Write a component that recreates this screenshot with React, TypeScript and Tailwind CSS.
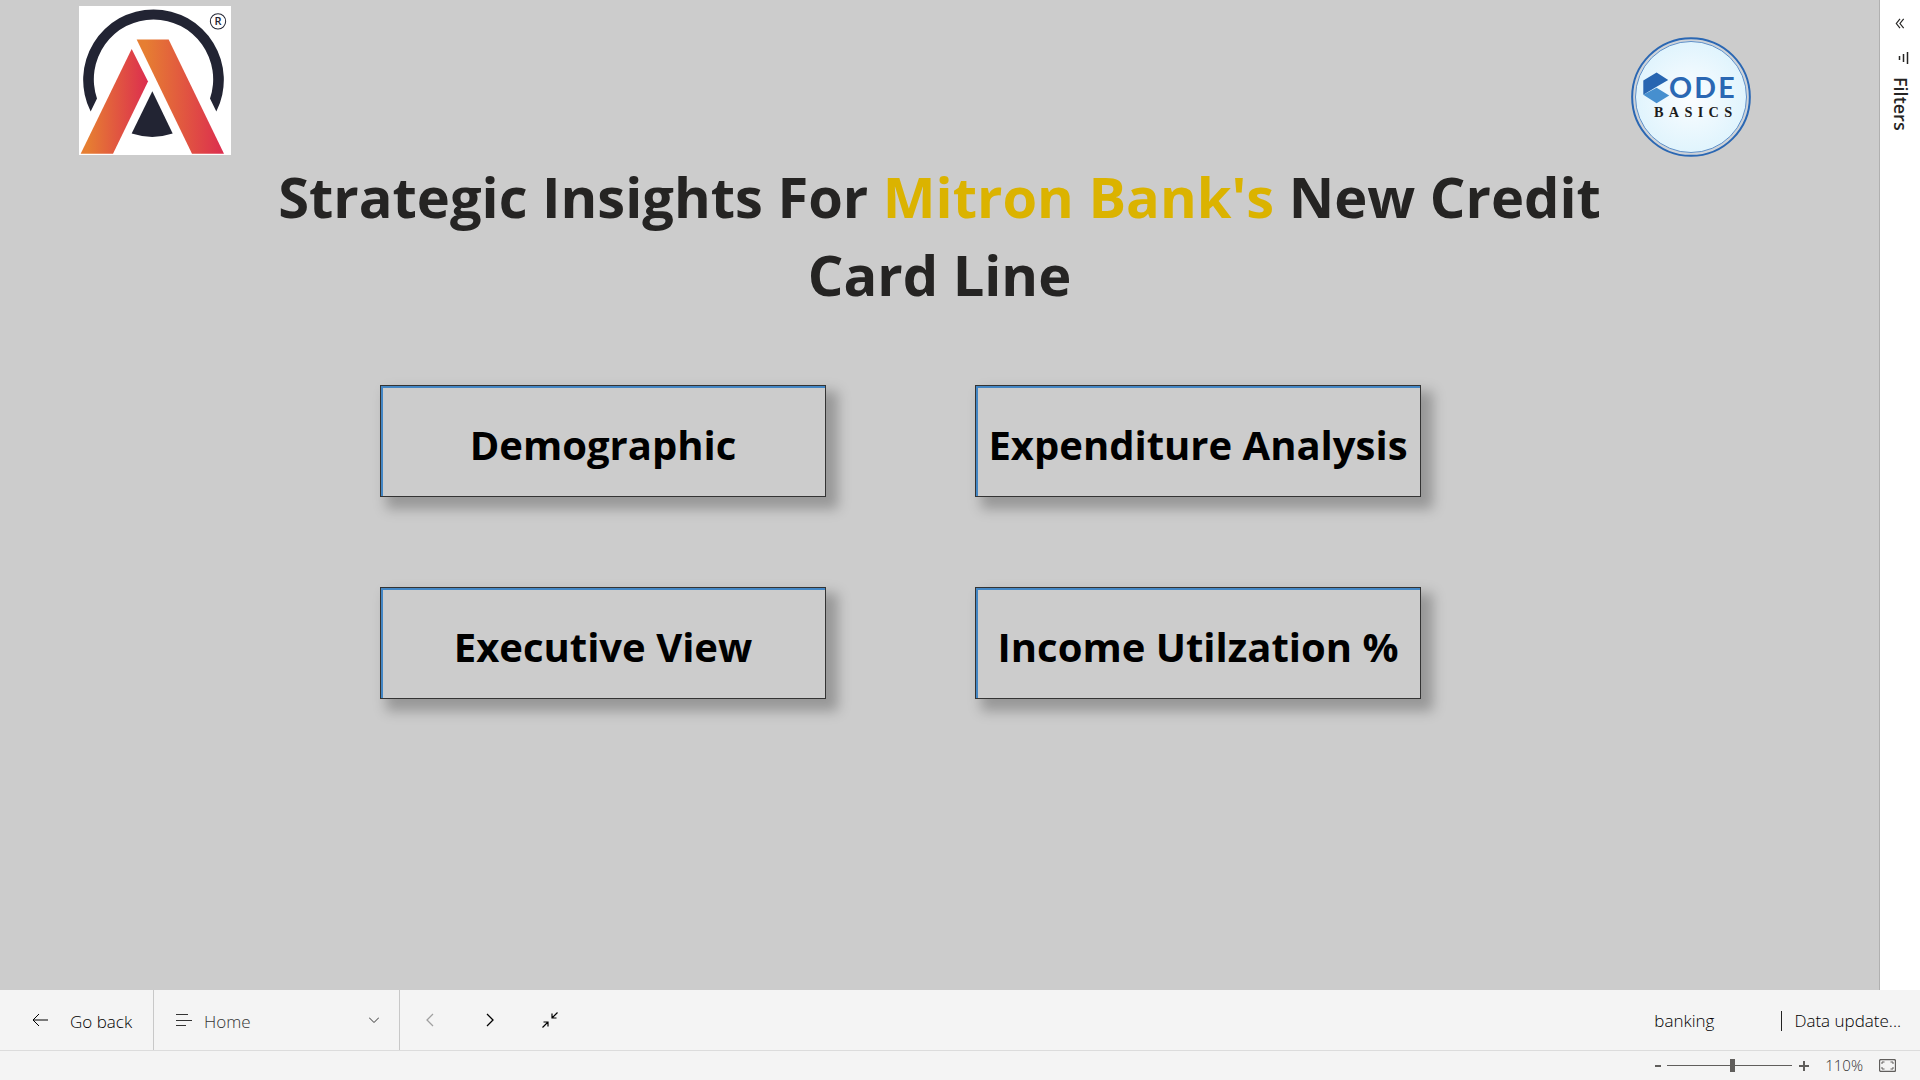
import React from "react";

const tiles = ["Demographic", "Expenditure Analysis", "Executive View", "Income Utilzation %"];

function AtliqLogo() {
  return (
    <svg className="h-[149px] w-[152px]" viewBox="57 19 456 446" preserveAspectRatio="none" role="img" aria-label="AtliQ logo">
      <defs>
        <linearGradient id="legLeft" x1="62" x2="264" y1="0" y2="0" gradientUnits="userSpaceOnUse">
          <stop offset="0.1" stopColor="#e67e32" />
          <stop offset="1" stopColor="#dc2d4f" />
        </linearGradient>
        <linearGradient id="legRight" x1="230" x2="492" y1="0" y2="0" gradientUnits="userSpaceOnUse">
          <stop offset="0.1" stopColor="#e67e32" />
          <stop offset="1" stopColor="#dc2d4f" />
        </linearGradient>
      </defs>
      <rect x="57" y="19" width="456" height="446" fill="#fff" />
      <path d="M92 335A211 211 0 1 1 469 335L450 296A179 179 0 1 0 111 296Z" fill="#222433" />
      <path d="M215 148L264 245L159 461H62Z" fill="url(#legLeft)" />
      <path d="M230 119H326L492 461H396Z" fill="url(#legRight)" />
      <path d="M277 274L338 401Q277 421 215 401Z" fill="#222433" />
      <circle cx="474" cy="65" r="23" fill="none" stroke="#222433" strokeWidth="3" />
      <text x="474" y="77" textAnchor="middle" fontSize="33" fontWeight="600" fill="#222433">R</text>
    </svg>
  );
}

function CodeBasicsLogo() {
  return (
    <svg className="mt-[31px] size-[120px]" viewBox="62 50 361 361" role="img" aria-label="Codebasics logo">
      <defs>
        <radialGradient id="disc">
          <stop offset="0" stopColor="#fbfdff" />
          <stop offset="1" stopColor="#e0f4fd" />
        </radialGradient>
      </defs>
      <circle cx="242.500" cy="230.500" r="177" fill="#cfd3d8" stroke="#2a67b3" strokeWidth="6" />
      <circle cx="242.500" cy="230.500" r="167" fill="url(#disc)" stroke="#5f90c8" strokeWidth="3" />
      <path d="M139 203L177 226L139 249L99 224Z" fill="#468fcf" />
      <path d="M99 181V224L139 200L174 179L139 157Z" fill="#2765b1" />
      <text x="176" y="235" fontFamily="Lato" fontWeight="700" fontSize="86" fill="#2a67b3" letterSpacing="7">ODE</text>
      <text x="131" y="290" fontFamily="Liberation Serif" fontWeight="700" fontSize="43" fill="#1c1c1c" letterSpacing="16">BASICS</text>
    </svg>
  );
}

const line = { fill: "none", stroke: "currentColor", strokeWidth: 1 };

export default function App() {
  return (
    <div className="flex min-h-screen flex-col bg-[#f4f4f4] font-['Open_Sans',sans-serif] text-[#252423]">
      <div className="flex flex-1">
        <main className="flex-1 border-r border-[#b0b0b0] bg-[#ccc]">
          <header className="flex items-start justify-between pt-1.5 pr-32 pl-[79px]">
            <AtliqLogo />
            <CodeBasicsLogo />
          </header>
          <h1 className="mx-auto max-w-[1400px] text-center text-[56px] leading-[78px] font-bold">
            Strategic Insights For <span className="text-[#dbb300]">Mitron Bank's</span> New Credit
            <br />
            Card Line
          </h1>
          <nav className="mt-[72px] grid grid-cols-[446px_446px] justify-center gap-x-[149px] gap-y-[90px] pr-[78px]">
            {tiles.map((t) => (
              <button
                key={t}
                className="h-28 border border-[#333] pt-2 text-[40px] whitespace-nowrap font-bold text-black shadow-[inset_2px_2px_0_#4386c4,9px_9px_12px_3px_rgba(0,0,0,0.26)]"
              >
                {t}
              </button>
            ))}
          </nav>
        </main>
        <aside className="flex w-10 flex-col items-center bg-white">
          <button aria-label="Expand filters" className="mt-[18px]">
            <svg className="h-[11px] w-3" viewBox="0 0 12 12" {...line} strokeWidth={1.3}>
              <path d="M6 1L2 6L6 11M10 1L6 6L10 11" />
            </svg>
          </button>
          <svg className="mt-[22px] ml-1.5 h-3.5 w-3" viewBox="0 0 12 14" fill="none" stroke="currentColor">
            <path d="M10.500 1V13M6.500 3V11M2.500 5V9" strokeWidth="1.5" />
          </svg>
          <h2 className="mt-3 ml-0.5 text-[18px] leading-6 font-semibold [writing-mode:vertical-rl]">Filters</h2>
        </aside>
      </div>
      <footer>
        <div className="flex h-[61px] items-stretch border-b border-[#dcdcdc] text-[17px] font-light text-black">
          <button className="flex w-[154px] items-center border-r border-[#c8c8c8] pl-8">
            <svg className="h-3.5 w-4" viewBox="0 0 16 14" {...line}>
              <path d="M16 7H1M7 1L1 7L7 13" />
            </svg>
            <span className="ml-[22px] pt-1">Go back</span>
          </button>
          <div className="relative flex w-[246px] items-center border-r border-[#c8c8c8] text-[#333]">
            <svg className="pointer-events-none absolute left-[22px] h-3 w-4" viewBox="0 0 16 12" {...line}>
              <path d="M0 0.500H12M0 6.500H16M0 11.500H10" />
            </svg>
            <select aria-label="Page" className="h-full w-full appearance-none bg-transparent pt-1 pl-[50px]">
              <option>Home</option>
            </select>
            <svg className="pointer-events-none absolute right-5 h-1.5 w-2.5" viewBox="0 0 10 6" {...line}>
              <path d="M0 0.500L5 5.500L10 0.500" />
            </svg>
          </div>
          <button aria-label="Previous page" className="flex w-[60px] items-center justify-center text-[#a0a0a0]">
            <svg className="h-3.5 w-2" viewBox="0 0 8 14" {...line} strokeWidth={1.3}>
              <path d="M7 1L1 7L7 13" />
            </svg>
          </button>
          <button aria-label="Next page" className="flex w-[60px] items-center justify-center">
            <svg className="h-3.5 w-2" viewBox="0 0 8 14" {...line} strokeWidth={1.3}>
              <path d="M1 1L7 7L1 13" />
            </svg>
          </button>
          <button aria-label="Exit full screen" className="flex w-[60px] items-center justify-center">
            <svg className="h-4 w-4" viewBox="0 0 16 16" {...line} strokeWidth={1.2}>
              <path d="M15.500 0.500L10 6M10 1.500V6H14.500M0.500 15.500L6 10M1.500 10H6V14.500" />
            </svg>
          </button>
          <div className="ml-auto flex items-center pt-0.5 pr-[19px]">
            <span>banking</span>
            <span className="mr-3 ml-[67px] h-5 w-px bg-[#222]" />
            <span>Data update...</span>
          </div>
        </div>
        <div className="flex h-[29px] items-center justify-end pr-6 text-[#605e5c]">
          <button aria-label="Zoom out" className="flex h-4 w-3 items-center">
            <span className="h-0.5 w-1.5 bg-[#605e5c]" />
          </button>
          <input
            type="range"
            aria-label="Zoom"
            defaultValue={52}
            className="h-[13px] w-[125px] appearance-none bg-[linear-gradient(#605e5c,#605e5c)] bg-[length:100%_1px] bg-center bg-no-repeat [&::-webkit-slider-thumb]:h-[13px] [&::-webkit-slider-thumb]:w-[5px] [&::-webkit-slider-thumb]:appearance-none [&::-webkit-slider-thumb]:bg-[#605e5c]"
          />
          <button aria-label="Zoom in" className="ml-[7px]">
            <svg className="size-2.5" viewBox="0 0 10 10" {...line} strokeWidth={2}>
              <path d="M0 5H10M5 0V10" />
            </svg>
          </button>
          <span className="ml-4 text-[15px] font-light text-[#333]">110%</span>
          <button aria-label="Fit to page" className="ml-4">
            <svg className="h-[13px] w-[17px]" viewBox="0 0 17 13" {...line}>
              <rect x="0.500" y="0.500" width="16" height="12" rx="1.500" strokeWidth="1.3" />
              <path d="M3 5V3H5.500M11.500 3H14V5M14 8V10H11.500M5.500 10H3V8" />
            </svg>
          </button>
        </div>
      </footer>
    </div>
  );
}
